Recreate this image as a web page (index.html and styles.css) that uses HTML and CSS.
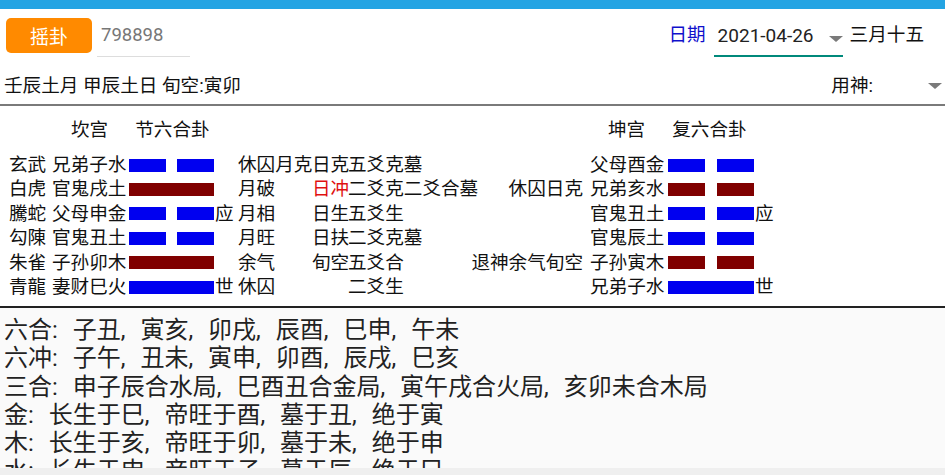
FILE: index.html
```html
<!DOCTYPE html>
<html lang="zh">
<head>
<meta charset="utf-8">
<title>六爻排盘</title>
<link rel="stylesheet" href="styles.css">
</head>
<body>
<div class="topbar"></div>
<div class="toolbar">
  <button class="btn">摇卦</button>
  <div class="input">798898</div>
  <span class="date-label">日期</span>
  <div class="date-select"><span>2021-04-26</span><span class="caret"></span></div>
  <span class="lunar">三月十五</span>
</div>
<div class="info">
  <span>壬辰土月 甲辰土日 旬空:寅卯</span>
  <div class="yongshen"><span>用神:</span><span class="caret"></span></div>
</div>
<div class="hex-area">
  <div class="hex left">
    <div class="hex-title"><span>坎宫</span><span>节六合卦</span></div>
    <div class="row"><span class="god">玄武</span><span class="name">兄弟子水</span><span class="bar yin"><i></i><i></i></span><span class="mark"></span><span class="month">休囚月克</span><span class="day">日克</span><span class="yao">五爻克墓</span></div>
    <div class="row"><span class="god">白虎</span><span class="name">官鬼戌土</span><span class="bar yang red"><i></i></span><span class="mark"></span><span class="month">月破</span><span class="day hot">日冲</span><span class="yao">二爻克二爻合墓</span></div>
    <div class="row"><span class="god">騰蛇</span><span class="name">父母申金</span><span class="bar yin"><i></i><i></i></span><span class="mark">应</span><span class="month">月相</span><span class="day">日生</span><span class="yao">五爻生</span></div>
    <div class="row"><span class="god">勾陳</span><span class="name">官鬼丑土</span><span class="bar yin"><i></i><i></i></span><span class="mark"></span><span class="month">月旺</span><span class="day">日扶</span><span class="yao">二爻克墓</span></div>
    <div class="row"><span class="god">朱雀</span><span class="name">子孙卯木</span><span class="bar yang red"><i></i></span><span class="mark"></span><span class="month">余气</span><span class="day">旬空</span><span class="yao">五爻合</span></div>
    <div class="row"><span class="god">青龍</span><span class="name">妻财巳火</span><span class="bar yang"><i></i></span><span class="mark">世</span><span class="month">休囚</span><span class="day"></span><span class="yao">二爻生</span></div>
  </div>
  <div class="hex right">
    <div class="hex-title"><span>坤宫</span><span>复六合卦</span></div>
    <div class="row"><span class="status"></span><span class="name">父母酉金</span><span class="bar yin"><i></i><i></i></span><span class="mark"></span></div>
    <div class="row"><span class="status">休囚日克</span><span class="name">兄弟亥水</span><span class="bar yin red"><i></i><i></i></span><span class="mark"></span></div>
    <div class="row"><span class="status"></span><span class="name">官鬼丑土</span><span class="bar yin"><i></i><i></i></span><span class="mark">应</span></div>
    <div class="row"><span class="status"></span><span class="name">官鬼辰土</span><span class="bar yin"><i></i><i></i></span><span class="mark"></span></div>
    <div class="row"><span class="status">退神余气旬空</span><span class="name">子孙寅木</span><span class="bar yin red"><i></i><i></i></span><span class="mark"></span></div>
    <div class="row"><span class="status"></span><span class="name">兄弟子水</span><span class="bar yang"><i></i></span><span class="mark">世</span></div>
  </div>
</div>
<div class="notes">
  <div class="line">六合: 子丑, 寅亥, 卯戌, 辰酉, 巳申, 午未</div>
  <div class="line">六冲: 子午, 丑未, 寅申, 卯酉, 辰戌, 巳亥</div>
  <div class="line">三合: 申子辰合水局, 巳酉丑合金局, 寅午戌合火局, 亥卯未合木局</div>
  <div class="line">金: 长生于巳, 帝旺于酉, 墓于丑, 绝于寅</div>
  <div class="line">木: 长生于亥, 帝旺于卯, 墓于未, 绝于申</div>
  <div class="line">水: 长生于申, 帝旺于子, 墓于辰, 绝于巳</div>
</div>
<div class="bottom-strip"></div>
</body>
</html>
```

FILE: styles.css
```css
* { box-sizing: border-box; }

body {
  margin: 0;
  width: 945px;
  height: 475px;
  overflow: hidden;
  background: #ffffff;
  color: #111111;
  font-family: Roboto, "Noto Sans CJK SC", sans-serif;
  font-size: 18.6px;
}

.topbar {
  height: 9px;
  background: #24a4e3;
}

.toolbar {
  display: flex;
  align-items: flex-start;
  height: 48px;
  padding: 9px 21px 0 6px;
}

.btn {
  width: 86px;
  height: 35px;
  padding: 0;
  border: 0;
  border-radius: 5px;
  background: #ff8a00;
  color: #ffffff;
  font-family: "Noto Sans CJK SC", sans-serif;
  font-size: 19px;
}

.input {
  margin-left: 5px;
  width: 93px;
  height: 39px;
  padding-left: 4px;
  border-bottom: 1px solid #dddddd;
  line-height: 35px;
  font-family: Roboto, "Noto Sans", sans-serif;
  font-size: 18.5px;
  color: #777777;
}

.date-label {
  margin-left: auto;
  line-height: 35px;
  color: #1010cc;
}

.date-select {
  display: flex;
  justify-content: space-between;
  align-items: flex-start;
  margin-left: 8px;
  width: 129px;
  height: 39px;
  padding-left: 4px;
  border-bottom: 2px solid #00897b;
  line-height: 35px;
  font-family: Roboto, "Noto Sans", sans-serif;
  font-size: 19px;
  color: #222222;
}

.caret {
  width: 0;
  height: 0;
  border-left: 7px solid transparent;
  border-right: 7px solid transparent;
  border-top: 6px solid #7a7a7a;
}

.date-select .caret { margin-top: 18px; }

.lunar {
  margin-left: 7px;
  line-height: 35px;
}

.info {
  display: flex;
  align-items: center;
  height: 49px;
  padding: 5px 3px 0 4px;
  border-bottom: 2px solid #7a7a7a;
}

.yongshen {
  display: flex;
  align-items: center;
  margin-left: auto;
}

.yongshen .caret {
  margin-left: 55px;
  margin-top: 5px;
}

.hex-area {
  display: flex;
  height: 202px;
  padding-top: 12px;
  border-bottom: 2px solid #222222;
}

.hex { flex: none; }

.hex.left {
  width: 470px;
  padding-left: 9px;
}

.hex.right { width: 475px; }

.hex-title {
  display: flex;
  gap: 27px;
  height: 24px;
  line-height: 24px;
  margin-bottom: 11px;
}

.left .hex-title { margin-left: 62px; }
.right .hex-title { margin-left: 138px; }

.row {
  display: flex;
  height: 24.4px;
  line-height: 24.4px;
  white-space: nowrap;
}

.row > span { flex: none; }

.god { width: 43px; }
.left .name { width: 77px; }
.right .name { width: 78px; margin-left: 7px; }
.status { width: 113px; text-align: right; }

.bar {
  display: flex;
  justify-content: space-between;
  align-items: center;
  width: 85px;
}

.right .bar { width: 86px; }

.bar i {
  display: block;
  height: 13px;
  background: #0000f0;
}

.bar.red i { background: #800000; }
.bar.yin i { width: 37px; }
.bar.yang i { width: 100%; }

.mark { width: 24px; padding-left: 1px; }
.month { width: 74px; }
.day { width: 36px; }
.hot { color: #e01010; }

.notes {
  height: 160px;
  overflow: hidden;
  padding: 8px 0 0 4px;
  background: #fafafa;
  color: #222222;
  font-size: 24px;
  line-height: 28.3px;
  word-spacing: 9px;
  white-space: nowrap;
}

.line {
  height: 28.3px;
}

.bottom-strip {
  height: 7px;
  background: #efefef;
}
```
